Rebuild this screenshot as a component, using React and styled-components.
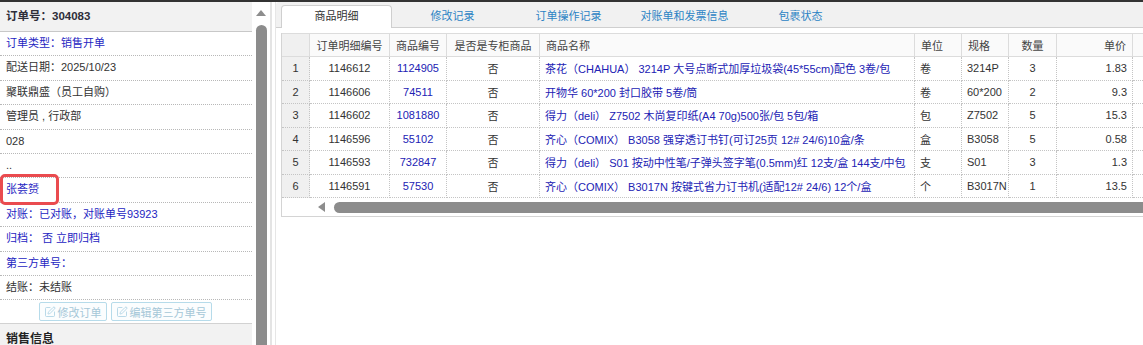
import React from "react";
import styled, { createGlobalStyle } from "styled-components";
import { SquarePen } from "lucide-react";

const GlobalStyle = createGlobalStyle`
  html, body {
    margin: 0;
    padding: 0;
    background: #fff;
    overflow: hidden;
  }
  body {
    font-family: "Liberation Sans", "Noto Sans CJK SC", sans-serif;
    font-size: 11px;
    color: #333;
  }
`;

const info = [
  { text: "订单类型：销售开单", blue: true },
  { text: "配送日期：2025/10/23" },
  { text: "聚联鼎盛（员工自购）" },
  { text: "管理员 , 行政部" },
  { text: "028" },
  { text: ".." },
  { text: "张荟赟", blue: true, marked: true },
  { text: "对账：已对账，对账单号93923", blue: true },
  { text: "归档： 否 立即归档", blue: true },
  { text: "第三方单号：", blue: true },
  { text: "结账：未结账" },
];

const tabs = ["商品明细", "修改记录", "订单操作记录", "对账单和发票信息", "包裹状态"];

const columns = [
  { title: "", width: 28, align: "center" },
  { title: "订单明细编号", width: 80, align: "center" },
  { title: "商品编号", width: 57, align: "center" },
  { title: "是否是专柜商品", width: 93, align: "center" },
  { title: "商品名称", width: 375, align: "left" },
  { title: "单位", width: 47, align: "left" },
  { title: "规格", width: 47, align: "left" },
  { title: "数量", width: 48, align: "center" },
  { title: "单价", width: 76, align: "right" },
  { title: "", width: 90, align: "right" },
];

const rows = [
  ["1146612", "1124905", "否", "茶花（CHAHUA） 3214P 大号点断式加厚垃圾袋(45*55cm)配色 3卷/包", "卷", "3214P", "3", "1.83", ""],
  ["1146606", "74511", "否", "开物华 60*200 封口胶带 5卷/筒", "卷", "60*200", "2", "9.3", ""],
  ["1146602", "1081880", "否", "得力（deli） Z7502 木尚复印纸(A4 70g)500张/包 5包/箱", "包", "Z7502", "5", "15.3", ""],
  ["1146596", "55102", "否", "齐心（COMIX） B3058 强穿透订书钉(可订25页 12# 24/6)10盒/条", "盒", "B3058", "5", "0.58", ""],
  ["1146593", "732847", "否", "得力（deli） S01 按动中性笔/子弹头签字笔(0.5mm)红 12支/盒 144支/中包", "支", "S01", "3", "1.3", ""],
  ["1146591", "57530", "否", "齐心（COMIX） B3017N 按键式省力订书机(适配12# 24/6) 12个/盒", "个", "B3017N", "1", "13.5", ""],
];

const App = () => {
  return (
    <Page>
      <GlobalStyle />
      <TopLine />
      <Main>
        <LeftPane>
          <OrderHeader>订单号：304083</OrderHeader>
          {info.map((item, ind) => (
            <InfoRow key={ind} $blue={item.blue}>
              {item.text}
              {item.marked && <Marker />}
            </InfoRow>
          ))}
          <ButtonRow>
            <GhostButton>
              <SquarePen size={12} strokeWidth={1.6} color="#a8cfe2" />
              修改订单
            </GhostButton>
            <GhostButton>
              <SquarePen size={12} strokeWidth={1.6} color="#a8cfe2" />
              编辑第三方单号
            </GhostButton>
          </ButtonRow>
          <SectionHeader>销售信息</SectionHeader>
        </LeftPane>
        <VScroll>
          <UpArrow />
          <VThumb />
        </VScroll>
        <Splitter />
        <RightPane>
          <TabBar>
            {tabs.map((t, ind) => (
              <Tab key={t} $active={ind === 0}>{t}</Tab>
            ))}
          </TabBar>
          <TabBody>
            <GridBox>
              <Grid>
                <colgroup>
                  {columns.map((c, ind) => (
                    <col key={ind} style={{ width: c.width }} />
                  ))}
                </colgroup>
                <thead>
                  <tr>
                    {columns.map((c, ind) => (
                      <Th key={ind} $align={c.align} $num={ind === 0}>
                        {c.title}
                      </Th>
                    ))}
                  </tr>
                </thead>
                <tbody>
                  {rows.map((r, ind) => (
                    <tr key={ind}>
                      <Td $align="center" $num>{ind + 1}</Td>
                      {r.map((v, ci) => (
                        <Td
                          key={ci}
                          $align={columns[ci + 1].align}
                          $blue={ci === 1 || ci === 3}
                        >
                          {v}
                        </Td>
                      ))}
                    </tr>
                  ))}
                </tbody>
              </Grid>
              <HScrollRow>
                <Frozen />
                <HTrack>
                  <LeftArrow />
                  <HThumb />
                </HTrack>
              </HScrollRow>
            </GridBox>
          </TabBody>
        </RightPane>
      </Main>
    </Page>
  );
};

const Page = styled.div`
  display: flex;
  flex-direction: column;
  width: 1143px;
  height: 345px;
  overflow: hidden;
`;

const TopLine = styled.div`
  height: 2px;
  background: #333;
  flex-shrink: 0;
`;

const Main = styled.div`
  display: flex;
  flex: 1;
  min-height: 0;
`;

const LeftPane = styled.div`
  width: 252px;
  flex-shrink: 0;
  display: flex;
  flex-direction: column;
`;

const OrderHeader = styled.div`
  height: 30px;
  box-sizing: border-box;
  background: #f2f2f2;
  border-bottom: 1px solid #c8c8c8;
  padding-left: 6px;
  line-height: 29px;
  font-size: 11.5px;
  font-weight: bold;
  color: #2e2e3a;
  flex-shrink: 0;
`;

const InfoRow = styled.div`
  position: relative;
  height: 24.4px;
  box-sizing: border-box;
  border-bottom: 1px dotted #b8b8b8;
  padding-left: 6px;
  line-height: 23.4px;
  color: ${(props) => (props.$blue ? "#2525c2" : "#333")};
  white-space: nowrap;
  flex-shrink: 0;
`;

const Marker = styled.span`
  position: absolute;
  left: 0;
  top: -4px;
  width: 59px;
  height: 31px;
  box-sizing: border-box;
  border: 3px solid #ea4b4f;
  border-radius: 5px;
  pointer-events: none;
`;

const ButtonRow = styled.div`
  height: 24px;
  box-sizing: border-box;
  border-bottom: 1px solid #d2d2d2;
  display: flex;
  align-items: center;
  justify-content: center;
  gap: 4px;
  padding-right: 2px;
  flex-shrink: 0;
`;

const GhostButton = styled.button`
  display: flex;
  align-items: center;
  gap: 2px;
  height: 19px;
  padding: 0 4px;
  border: 1px solid #b6dbea;
  border-radius: 2px;
  background: #fbfdfe;
  color: #a5c7d8;
  font-family: inherit;
  font-size: 11px;
  cursor: default;
`;

const SectionHeader = styled.div`
  height: 30px;
  background: #f2f2f2;
  padding-left: 6px;
  line-height: 30px;
  font-size: 12px;
  font-weight: bold;
  color: #222;
  flex-shrink: 0;
`;

const VScroll = styled.div`
  width: 12px;
  margin-left: 3px;
  flex-shrink: 0;
  display: flex;
  flex-direction: column;
  align-items: center;
  padding-top: 8px;
`;

const UpArrow = styled.div`
  width: 0;
  height: 0;
  border-left: 5.5px solid transparent;
  border-right: 5.5px solid transparent;
  border-bottom: 6px solid #8d8d8d;
`;

const VThumb = styled.div`
  margin-top: 9px;
  width: 11px;
  flex: 1;
  background: #8c8c8c;
  border-radius: 6px 6px 0 0;
`;

const Splitter = styled.div`
  width: 6px;
  margin-left: 3px;
  box-sizing: border-box;
  border-left: 2px solid #e4e4e4;
  border-right: 1px solid #e6e6e6;
  flex-shrink: 0;
`;

const RightPane = styled.div`
  flex: 1;
  min-width: 0;
  display: flex;
  flex-direction: column;
  overflow: hidden;
`;

const TabBar = styled.div`
  height: 26px;
  box-sizing: border-box;
  display: flex;
  align-items: flex-end;
  padding-left: 5px;
  background: #f1f1f1;
  border-bottom: 1px solid #cfcfcf;
  border-top-left-radius: 3px;
  flex-shrink: 0;
`;

const Tab = styled.div`
  width: 111px;
  height: 23px;
  box-sizing: border-box;
  margin-right: 5px;
  margin-bottom: -1px;
  text-align: center;
  line-height: 21px;
  font-size: 11px;
  color: ${(props) => (props.$active ? "#333" : "#2b83c4")};
  background: ${(props) => (props.$active ? "#fff" : "transparent")};
  border: 1px solid ${(props) => (props.$active ? "#cfcfcf" : "transparent")};
  border-bottom: none;
  border-radius: 4px 4px 0 0;
  flex-shrink: 0;
`;

const TabBody = styled.div`
  padding: 5px 0 0 5px;
  flex: 1;
`;

const GridBox = styled.div`
  border-left: 1px solid #d4d4d4;
  border-bottom: 1px solid #d4d4d4;
  overflow: hidden;
`;

const Grid = styled.table`
  table-layout: fixed;
  border-collapse: separate;
  border-spacing: 0;
  width: 941px;
`;

const Th = styled.th`
  height: 24px;
  box-sizing: border-box;
  padding: 0 6px;
  font-weight: normal;
  font-size: 11px;
  color: #444;
  text-align: ${(props) => props.$align};
  background: ${(props) => (props.$num ? "#f0f0f0" : "#fafafa")};
  border-top: 1px solid #dcdcdc;
  border-right: 1px solid #dcdcdc;
  border-bottom: 1px solid #dcdcdc;
  white-space: nowrap;
  overflow: hidden;
`;

const Td = styled.td`
  height: 23.5px;
  box-sizing: border-box;
  padding: 0 5px 0 5px;
  font-size: 11px;
  color: ${(props) => (props.$blue ? "#2222b4" : "#333")};
  text-align: ${(props) => props.$align};
  background: ${(props) => (props.$num ? "#f0f0f0" : "#fff")};
  border-right: 1px dotted #c4c4c4;
  border-bottom: 1px dotted #c4c4c4;
  white-space: nowrap;
  overflow: hidden;
`;

const HScrollRow = styled.div`
  display: flex;
  height: 18px;
`;

const Frozen = styled.div`
  width: 28px;
  flex-shrink: 0;
`;

const HTrack = styled.div`
  flex: 1;
  display: flex;
  align-items: center;
  padding-left: 8px;
`;

const LeftArrow = styled.div`
  width: 0;
  height: 0;
  border-top: 5px solid transparent;
  border-bottom: 5px solid transparent;
  border-right: 7px solid #8d8d8d;
`;

const HThumb = styled.div`
  margin-left: 9px;
  flex: 1;
  height: 11px;
  background: #8c8c8c;
  border-radius: 6px 0 0 6px;
`;

export default App;
